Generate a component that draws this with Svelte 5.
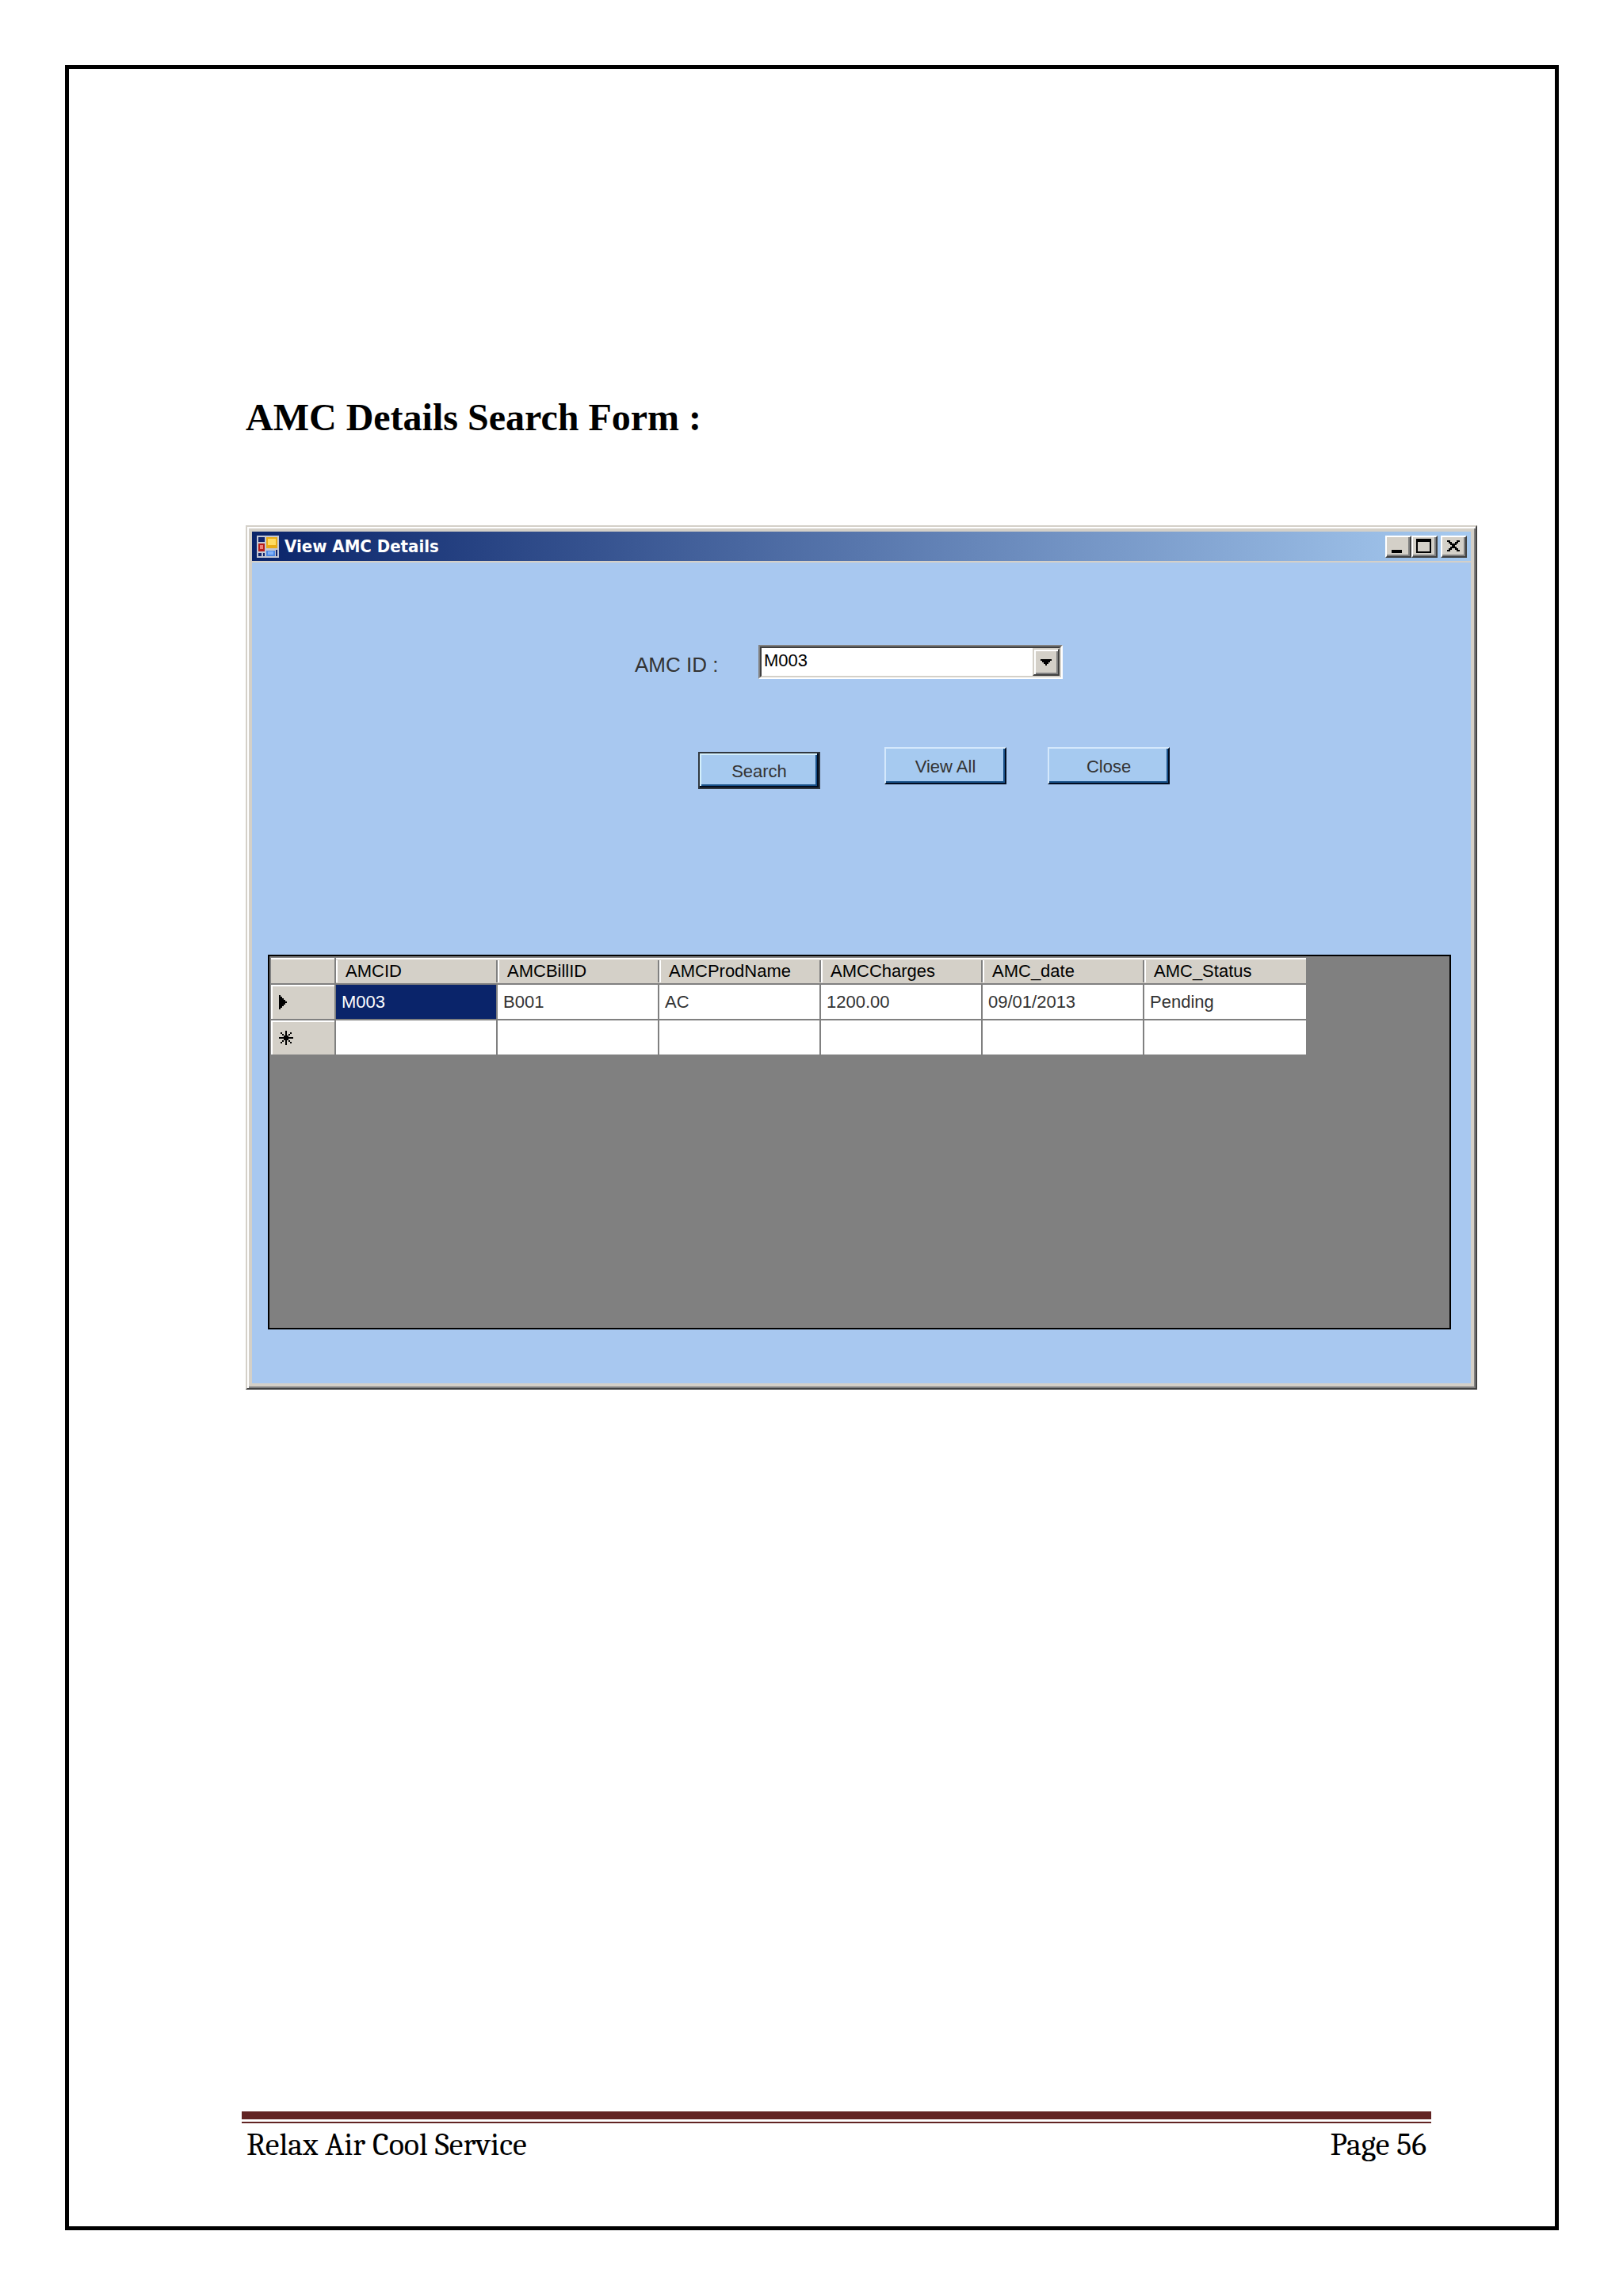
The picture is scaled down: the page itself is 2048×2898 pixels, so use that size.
<script lang="ts">
  type Contract = {
    id: string
    bill: string
    product: string
    charges: string
    date: string
    status: string
  }

  const columns: { key: keyof Contract; label: string }[] = [
    { key: 'id', label: 'AMCID' },
    { key: 'bill', label: 'AMCBillID' },
    { key: 'product', label: 'AMCProdName' },
    { key: 'charges', label: 'AMCCharges' },
    { key: 'date', label: 'AMC_date' },
    { key: 'status', label: 'AMC_Status' }
  ]

  const contracts: Contract[] = [
    { id: 'M003', bill: 'B001', product: 'AC', charges: '1200.00', date: '09/01/2013', status: 'Pending' }
  ]

  let selectedId = 'M003'
  let rows = contracts
  let open = true

  function search() {
    rows = contracts.filter((c) => c.id === selectedId)
  }

  function viewAll() {
    rows = contracts
  }

  function close() {
    open = false
  }
</script>

<div class="page">
  <main class="sheet">
    <h1>AMC Details Search Form :</h1>

    {#if open}
      <section class="window" aria-label="View AMC Details">
        <header class="titlebar">
          <svg class="app-icon" viewBox="0 0 28 28" aria-hidden="true">
            <rect width="28" height="28" fill="#c4c8d4" />
            <rect x="2" y="2" width="8" height="6" fill="#10246c" />
            <rect x="2" y="10" width="8" height="10" fill="#b81c18" />
            <rect x="4" y="12" width="4" height="5" fill="#ee8078" />
            <rect x="12" y="2" width="14" height="14" fill="#e8ac18" />
            <rect x="14" y="4" width="10" height="8" fill="#ffdc60" />
            <rect x="2" y="22" width="4" height="4" fill="#10246c" />
            <rect x="8" y="22" width="2" height="4" fill="#10246c" />
            <rect x="12" y="19" width="11" height="7" fill="#4c88e4" />
            <rect x="14" y="20" width="7" height="4" fill="#80b0f8" />
            <rect x="24" y="18" width="2" height="8" fill="#10246c" />
          </svg>
          <span class="title">View AMC Details</span>
          <div class="caption-buttons">
            <button type="button" class="caption" aria-label="Minimize">
              <svg viewBox="0 0 28 24"><path d="M6 16h13v4H6z" /></svg>
            </button>
            <button type="button" class="caption" aria-label="Maximize">
              <svg viewBox="0 0 28 24"><path fill-rule="evenodd" d="M4 2h19v18H4zM6 6v12h15V6z" /></svg>
            </button>
            <button type="button" class="caption close" aria-label="Close window" on:click={close}>
              <svg viewBox="0 0 28 24">
                <path d="M6 4h4v2h2v2h4V6h2V4h4v2h-2v2h-2v2h-2v2h2v2h2v2h2v2h-4v-2h-2v-2h-4v2h-2v2H6v-2h2v-2h2v-2h2v-2h-2V8H8V6H6z" />
              </svg>
            </button>
          </div>
        </header>

        <div class="form">
          <div class="field">
            <label for="amc-id">AMC ID :</label>
            <div class="combo">
              <select id="amc-id" bind:value={selectedId}>
                {#each contracts as contract}
                  <option value={contract.id}>{contract.id}</option>
                {/each}
              </select>
              <span class="drop">
                <svg viewBox="0 0 14 8" aria-hidden="true"><path d="M0 0h14v2h-2v2h-2v2H8v2H6V6H4V4H2V2H0z" /></svg>
              </span>
            </div>
          </div>

          <div class="actions">
            <button type="button" class="btn default" on:click={search}>Search</button>
            <button type="button" class="btn" on:click={viewAll}>View All</button>
            <button type="button" class="btn" on:click={close}>Close</button>
          </div>

          <div class="grid">
            <table>
              <thead>
                <tr>
                  <td class="corner"></td>
                  {#each columns as column}
                    <th scope="col"><span>{column.label}</span></th>
                  {/each}
                </tr>
              </thead>
              <tbody>
                {#each rows as row, i}
                  <tr>
                    <td class="marker">
                      {#if i === 0}
                        <svg viewBox="0 0 18 18" aria-hidden="true"><path d="M0 0h2v2h2v2h2v2h2v2h2v2H8v2H6v2H4v2H2v2H0z" /></svg>
                      {/if}
                    </td>
                    {#each columns as column, j}
                      <td class:selected={i === 0 && j === 0}>{row[column.key]}</td>
                    {/each}
                  </tr>
                {/each}
                <tr>
                  <td class="marker">
                    <svg viewBox="0 0 18 18" aria-hidden="true">
                      <path d="M8 0h2v6h2v2h6v2h-6v2h-2v6H8v-6H6v-2H0V8h6V6h2zM2 2h2v2H2zM4 4h2v2H4zM14 2h2v2h-2zM12 4h2v2h-2zM2 14h2v2H2zM4 12h2v2H4zM14 14h2v2h-2zM12 12h2v2h-2z" />
                    </svg>
                  </td>
                  {#each columns as _}
                    <td></td>
                  {/each}
                </tr>
              </tbody>
            </table>
          </div>
        </div>
      </section>
    {/if}

    <footer>
      <span>Relax Air Cool Service</span>
      <span>Page 56</span>
    </footer>
  </main>
</div>

<style>
  :global(body) {
    margin: 0;
    background: #fff;
  }

  .page {
    box-sizing: border-box;
    min-height: 100vh;
    display: flex;
    padding: 82px 81px 83px 82px;
  }

  .sheet {
    flex: 1;
    display: flex;
    flex-direction: column;
    box-sizing: border-box;
    padding: 408px 98px 80px 223px;
    border: 5px solid #000;
    color: #000;
  }

  h1 {
    margin: 0 0 104px;
    font: bold 48px/64px 'Liberation Serif', serif;
  }

  /* classic window chrome */
  .window {
    border: 2px solid;
    border-color: #d4d0c8 #404040 #404040 #d4d0c8;
    font-family: 'Liberation Sans', sans-serif;
    font-size: 22px;
    background: #d4d0c8;
    padding: 6px;
    box-shadow: inset 2px 2px #fff, inset -2px -2px #808080;
  }

  .titlebar {
    display: flex;
    align-items: center;
    height: 37px;
    padding: 0 5px 0 6px;
    margin-bottom: 2px;
    background: linear-gradient(to right, #0a246a, #a6caf0);
  }

  .app-icon {
    width: 28px;
    height: 28px;
    margin-right: 7px;
  }

  .title {
    flex: 1;
    color: #fff;
    font: bold 22px/28px 'DejaVu Sans Condensed', 'Noto Sans', sans-serif;
  }

  .caption-buttons {
    display: flex;
  }

  .caption {
    box-sizing: border-box;
    width: 33px;
    height: 28px;
    padding: 0;
    border: 2px solid;
    border-color: #fff #404040 #404040 #fff;
    background: #d4d0c8;
    box-shadow: inset -2px -2px #808080;
  }

  .caption svg {
    display: block;
    width: 28px;
    height: 24px;
  }

  .caption.close {
    margin-left: 4px;
  }

  .form {
    padding: 104px 25px 68px 20px;
    background: #a8c8f0;
  }

  .field {
    display: flex;
    align-items: flex-end;
    margin-left: 463px;
  }

  label {
    width: 156px;
    color: #333;
    font-size: 26px;
    line-height: 36px;
  }

  .combo {
    position: relative;
    box-sizing: border-box;
    width: 384px;
    height: 43px;
    border: 2px solid;
    border-color: #808080 #fff #fff #808080;
  }

  select {
    appearance: none;
    box-sizing: border-box;
    width: 100%;
    height: 39px;
    padding: 0 40px 4px 3px;
    border: 2px solid;
    border-color: #404040 #d4d0c8 #d4d0c8 #404040;
    border-radius: 0;
    background: #fff;
    color: #000;
    font: inherit;
  }

  .drop {
    position: absolute;
    top: 2px;
    right: 2px;
    display: flex;
    align-items: center;
    justify-content: center;
    box-sizing: border-box;
    width: 34px;
    height: 35px;
    border: 2px solid;
    border-color: #d4d0c8 #404040 #404040 #d4d0c8;
    background: #d4d0c8;
    box-shadow: inset 2px 2px #fff, inset -2px -2px #808080;
    pointer-events: none;
  }

  .drop svg {
    width: 14px;
    height: 8px;
  }

  .actions {
    display: flex;
    margin: 86px 0 0 543px;
  }

  .btn {
    box-sizing: border-box;
    width: 154px;
    height: 47px;
    margin-right: 52px;
    padding: 2px 0 0;
    border: 2px solid;
    border-color: #d4e8fc #000c20 #000c20 #d4e8fc;
    background: #a6caf0;
    box-shadow: inset -2px -2px #185088;
    color: #333;
    font: inherit;
  }

  .btn.default {
    margin: 6px 81px 0 0;
    border-color: #303840;
    box-shadow: inset -2px -2px #000c20, inset 2px 2px #d4f0fc, inset -4px -4px #185088;
  }

  .grid {
    box-sizing: border-box;
    min-height: 473px;
    margin-top: 209px;
    padding: 2px;
    border: 2px solid #000;
    background: #808080;
  }

  table {
    table-layout: fixed;
    width: 1306px;
    border-collapse: separate;
    border-spacing: 0;
  }

  th,
  td {
    box-sizing: border-box;
    width: 204px;
    height: 45px;
    padding: 0 7px;
    border-right: 2px solid #808080;
    border-bottom: 2px solid #808080;
    background: #fff;
    color: #333;
    font-weight: normal;
    line-height: 30px;
    text-align: left;
    white-space: nowrap;
  }

  tr > :last-child {
    border-right: 0;
  }

  tbody tr:last-child td {
    height: 43px;
    border-bottom: 0;
  }

  thead th,
  thead .corner {
    height: 34px;
    background: #d4d0c8;
    color: #000;
    box-shadow: inset 0 2px #fff;
  }

  /* header separators stop short of the row edges */
  thead th {
    padding: 2px 0 0;
    border-right: 0;
  }

  thead th span {
    display: block;
    height: 28px;
    padding-left: 10px;
    border-left: 2px solid #fff;
    border-right: 2px solid #808080;
    line-height: 28px;
  }

  thead th:last-child span {
    border-right: 0;
  }

  .corner,
  .marker {
    width: 82px;
    background: #d4d0c8;
    box-shadow: inset 2px 2px #fff;
  }

  .marker {
    padding: 0 10px;
  }

  .marker svg {
    display: block;
    width: 18px;
    height: 18px;
  }

  td.selected {
    background: #0a246a;
    color: #fff;
  }

  footer {
    display: flex;
    justify-content: space-between;
    margin: auto 58px 0 -5px;
    padding: 9px 6px 0;
    border-top: 10px solid #622423;
    background: linear-gradient(#622423, #622423) 0 3px / 100% 2px no-repeat;
    font: 40px/46px Cambria, Caladea, 'Liberation Serif', serif;
  }
</style>
